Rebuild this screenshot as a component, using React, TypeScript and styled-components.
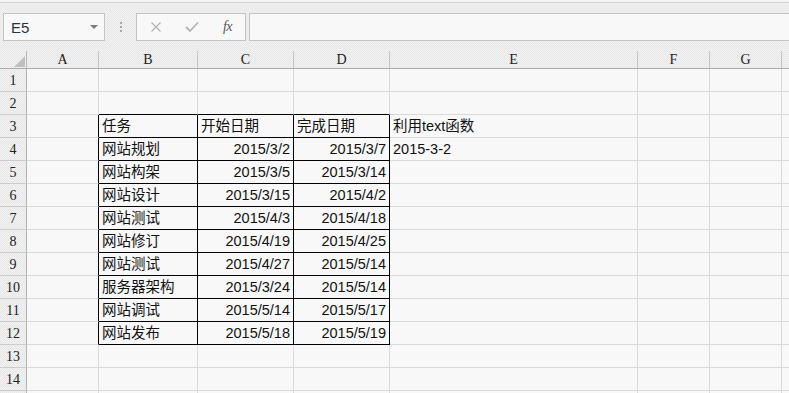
import React from "react";
import styled, { createGlobalStyle, css } from "styled-components";

const GlobalStyle = createGlobalStyle`
  html, body { margin: 0; padding: 0; background: #f8f8f8; overflow: hidden; }
  * { box-sizing: border-box; }
`;

const dotted = css`
  background-color: #eeeeee;
  background-image: repeating-conic-gradient(#e8e8e8 0 25%, #f1f1f1 0 50%);
  background-size: 2px 2px;
`;

const Page = styled.div`
  width: 789px;
  height: 393px;
  overflow: hidden;
  background: #f8f8f8;
  display: flex;
  flex-direction: column;
`;

const TopStrip = styled.div`
  height: 3px;
  flex: none;
  background: #f5f5f5;
  border-bottom: 1px solid #d2d2d2;
`;

const Toolbar = styled.div`
  ${dotted};
  height: 38px;
  flex: none;
  display: flex;
  align-items: flex-end;
  padding-left: 3px;
`;

const Box = styled.div`
  height: 28px;
  background: #f8f8f8;
  border: 1px solid #c4c4c4;
  display: flex;
  align-items: center;
`;

const NameBox = styled(Box)`
  width: 102px;
  padding: 0 6px 0 7px;
  justify-content: space-between;
  font-family: "Liberation Sans", Arial, sans-serif;
  font-size: 15px;
  color: #2a3440;
`;

const Caret = styled.span`
  width: 0;
  height: 0;
  border-left: 4px solid transparent;
  border-right: 4px solid transparent;
  border-top: 4px solid #7a7a7a;
`;

const Dots = styled.div`
  width: 31px;
  height: 28px;
  display: flex;
  flex-direction: column;
  align-items: center;
  justify-content: center;
  gap: 2px;
  & > span {
    width: 2px;
    height: 2px;
    background: #a8a8a8;
  }
`;

const FxBox = styled(Box)`
  width: 110px;
  justify-content: space-between;
  padding: 0 13px 0 13px;
`;

const FxLabel = styled.span`
  font-family: "Liberation Serif", "Times New Roman", serif;
  font-style: italic;
  font-size: 14px;
  color: #555;
  letter-spacing: -0.5px;
`;

const FormulaBox = styled(Box)`
  flex: 1;
  margin-left: 3px;
  margin-right: -2px;
`;

const Grid = styled.div`
  display: grid;
  grid-template-columns: 27px 72px 99px 96px 96px 248px 72px 72px 72px;
  grid-template-rows: 28px repeat(15, 23px);
`;

const Corner = styled.div`
  ${dotted};
  padding-top: 10px;
  border-bottom: 1px solid #ababab;
  display: flex;
`;

const CornerInner = styled.div`
  flex: 1;
  border-right: 1px solid #b8b8b8;
  position: relative;
  &::after {
    content: "";
    position: absolute;
    right: 1px;
    bottom: 1px;
    width: 0;
    height: 0;
    border-left: 11px solid transparent;
    border-bottom: 11px solid #c0c0c0;
  }
`;

const headerFont = css`
  font-family: "Liberation Serif", "Times New Roman", serif;
  font-size: 14px;
  line-height: 16px;
  color: #222;
`;

const ColHeader = styled.div`
  ${dotted};
  padding-top: 10px;
  border-bottom: 1px solid #ababab;
  display: flex;
`;

const ColLabel = styled.div`
  ${headerFont};
  flex: 1;
  border-right: 1px solid #c6c6c6;
  display: flex;
  align-items: center;
  justify-content: center;
  padding-top: 1px;
`;

const RowHeader = styled.div`
  ${dotted};
  ${headerFont};
  border-right: 1px solid #b4b4b4;
  border-bottom: 1px solid #cdcdcd;
  display: flex;
  align-items: center;
  justify-content: center;
  padding-top: 1px;
`;

const Cell = styled.div<{ $right?: boolean; $bottom?: boolean; $align?: "left" | "right" }>`
  background: #f8f8f8;
  border-right: 1px solid ${(p) => (p.$right ? "#000" : "#d9d9d9")};
  border-bottom: 1px solid ${(p) => (p.$bottom ? "#000" : "#d9d9d9")};
  text-align: ${(p) => (p.$align === "right" ? "right" : "left")};
  padding: 0 3px 0 3px;
  font-family: "Liberation Sans", "Noto Sans CJK SC", Arial, sans-serif;
  font-size: 14.5px;
  line-height: 23px;
  color: #111;
  white-space: nowrap;
  overflow: visible;
`;

const cols = ["A", "B", "C", "D", "E", "F", "G", ""];

const tableRows: [string, string, string][] = [
  ["任务", "开始日期", "完成日期"],
  ["网站规划", "2015/3/2", "2015/3/7"],
  ["网站构架", "2015/3/5", "2015/3/14"],
  ["网站设计", "2015/3/15", "2015/4/2"],
  ["网站测试", "2015/4/3", "2015/4/18"],
  ["网站修订", "2015/4/19", "2015/4/25"],
  ["网站测试", "2015/4/27", "2015/5/14"],
  ["服务器架构", "2015/3/24", "2015/5/14"],
  ["网站调试", "2015/5/14", "2015/5/17"],
  ["网站发布", "2015/5/18", "2015/5/19"],
];

const eCol: Record<number, string> = { 3: "利用text函数", 4: "2015-3-2" };

function CrossIcon() {
  return (
    <svg width="12" height="12" viewBox="0 0 12 12">
      <path d="M1.5 1.5 L10.5 10.5 M10.5 1.5 L1.5 10.5" stroke="#b4b4b4" strokeWidth="1.3" fill="none" />
    </svg>
  );
}

function CheckIcon() {
  return (
    <svg width="14" height="12" viewBox="0 0 14 12">
      <path d="M1 6 L5 10 L13 1.5" stroke="#b4b4b4" strokeWidth="1.8" fill="none" />
    </svg>
  );
}

export default function App() {
  const rows: React.ReactNode[] = [];
  for (let r = 1; r <= 15; r++) {
    rows.push(<RowHeader key={`h${r}`}>{r <= 14 ? r : ""}</RowHeader>);
    for (let c = 0; c < 8; c++) {
      const inTable = r >= 3 && r <= 12;
      let text = "";
      let right = false;
      let bottom = false;
      let align: "left" | "right" = "left";
      if (c >= 1 && c <= 3) {
        if (inTable) {
          right = true;
          bottom = true;
          text = tableRows[r - 3][c - 1];
          if (c > 1 && r > 3) align = "right";
        }
        if (r === 2) bottom = true;
      }
      if (c === 0 && inTable) right = true;
      if (c === 4 && eCol[r]) text = eCol[r];
      rows.push(
        <Cell key={`c${r}-${c}`} $right={right} $bottom={bottom} $align={align}>
          {text}
        </Cell>
      );
    }
  }

  return (
    <Page>
      <GlobalStyle />
      <TopStrip />
      <Toolbar>
        <NameBox>
          <span>E5</span>
          <Caret />
        </NameBox>
        <Dots>
          <span />
          <span />
          <span />
        </Dots>
        <FxBox>
          <CrossIcon />
          <CheckIcon />
          <FxLabel>fx</FxLabel>
        </FxBox>
        <FormulaBox />
      </Toolbar>
      <Grid>
        <Corner>
          <CornerInner />
        </Corner>
        {cols.map((c, i) => (
          <ColHeader key={i}>
            <ColLabel>{c}</ColLabel>
          </ColHeader>
        ))}
        {rows}
      </Grid>
    </Page>
  );
}
